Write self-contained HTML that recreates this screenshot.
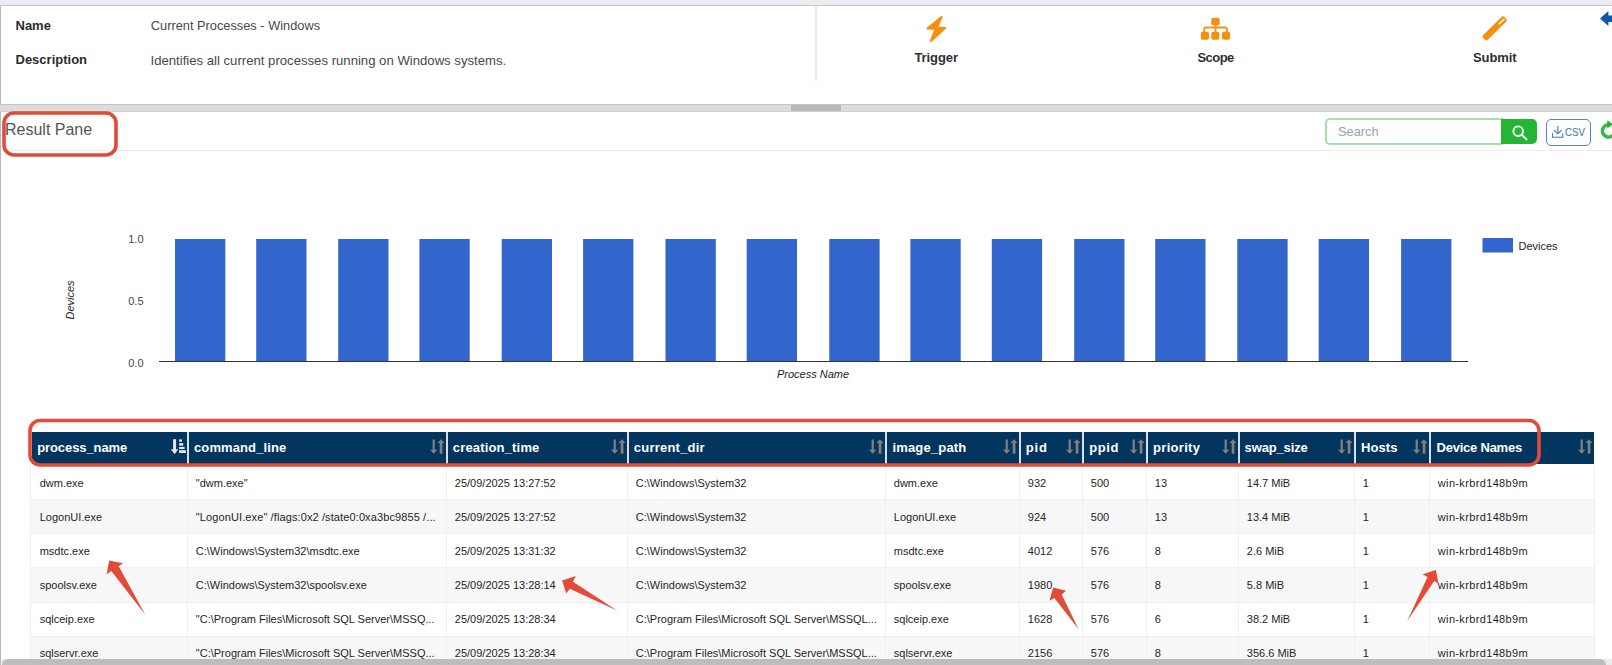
<!DOCTYPE html>
<html><head><meta charset="utf-8">
<style>
*{box-sizing:border-box;margin:0;padding:0}
html,body{width:1612px;height:665px;overflow:hidden;background:#fff}
body{position:relative;font-family:"Liberation Sans",sans-serif;color:#222}
.a{position:absolute}
.t{position:absolute;white-space:nowrap;line-height:1}
.lbl{font-size:13px;font-weight:bold;color:#2b2b2b}
.val{font-size:13px;color:#484848}
.hd{font-size:13px;font-weight:bold;color:#fff;letter-spacing:-0.3px}
.bd{font-size:11px;color:#252525}
.act{font-size:13px;font-weight:bold;color:#2f2f2f;letter-spacing:-0.1px}
</style></head><body>
<!-- top band -->
<div class="a" style="left:0;top:0;width:1612px;height:5px;background:#e9ecf1"></div>
<div class="a" style="left:0;top:5px;width:1612px;height:1px;background:#c6c8cc"></div>
<!-- left border -->
<div class="a" style="left:0;top:6px;width:1px;height:98px;background:#b9b9b9"></div>
<div class="a" style="left:0;top:112px;width:1px;height:553px;background:#b9b9b9"></div>

<!-- info -->
<div class="t lbl" style="left:15.5px;top:19px">Name</div>
<div class="t lbl" style="left:15.5px;top:53.3px">Description</div>
<div class="t val" style="left:150.8px;top:19.6px;font-size:12.8px">Current Processes - Windows</div>
<div class="t val" style="left:150.5px;top:53.8px;font-size:13.15px">Identifies all current processes running on Windows systems.</div>

<!-- divider -->
<div class="a" style="left:815px;top:6px;width:2px;height:75px;background:#e6e9ef"></div>

<!-- actions -->
<svg class="a" style="left:920px;top:12px" width="32" height="34" viewBox="920 12 32 34">
  <polygon points="941.5,17 927.5,28.5 935.5,29 931,41 945,28 937,27.5" fill="#f5900f" stroke="#f5900f" stroke-width="2.2" stroke-linejoin="round"/>
</svg>
<div class="t act" style="left:914.5px;top:51px">Trigger</div>

<svg class="a" style="left:1196px;top:14px" width="40" height="30" viewBox="1196 14 40 30">
  <g fill="#f5900f">
    <rect x="1211.2" y="17.7" width="8.5" height="7.5" rx="2"/>
    <rect x="1200.8" y="31.8" width="8.2" height="8" rx="2"/>
    <rect x="1211.2" y="31.8" width="8.2" height="8" rx="2"/>
    <rect x="1222" y="31.8" width="8.2" height="8" rx="2"/>
    <rect x="1214.6" y="24" width="1.8" height="8"/>
    <path d="M1204.2 32 V29.5 a2 2 0 0 1 2 -2 H1225 a2 2 0 0 1 2 2 V32" fill="none" stroke="#f5900f" stroke-width="1.8"/>
  </g>
</svg>
<div class="t act" style="left:1197.5px;top:51px;letter-spacing:-0.55px">Scope</div>

<svg class="a" style="left:1478px;top:12px" width="32" height="34" viewBox="1478 12 32 34">
  <rect x="1479.7" y="25.1" width="30" height="6.5" rx="2.2" transform="rotate(-44.5 1494.7 28.35)" fill="#f5900f"/>
  <line x1="1499.4" y1="23.7" x2="1504" y2="19.3" stroke="#fff" stroke-width="1.5" stroke-linecap="round"/>
</svg>
<div class="t act" style="left:1473px;top:51px">Submit</div>

<svg class="a" style="left:1596px;top:8px" width="16" height="22" viewBox="1596 8 16 22">
  <polygon points="1600,18.6 1608.4,11 1608.4,15.4 1612,15.4 1612,22 1608.4,22 1608.4,26" fill="#0b57a8"/>
</svg>

<!-- splitter -->
<div class="a" style="left:0;top:104px;width:1612px;height:8px;background:#dcdcdc;border-top:1px solid #c4c4c4;border-bottom:1px solid #cfcfcf"></div>
<div class="a" style="left:791px;top:105px;width:50px;height:6px;background:#b9b9b9"></div>

<!-- result pane header -->
<div class="t" style="left:5px;top:121.8px;font-size:16px;color:#555">Result Pane</div>
<div class="a" style="left:1px;top:150px;width:1611px;height:1px;background:#ececec"></div>

<div class="a" style="left:1325px;top:118px;width:178px;height:27px;border:2px solid #a3e2aa;border-right:none;border-radius:5px 0 0 5px"></div>
<div class="t" style="left:1338px;top:126.2px;font-size:12.8px;color:#9aa0a8">Search</div>
<div class="a" style="left:1501px;top:118.5px;width:35.5px;height:25.8px;background:#24b632;border-radius:0 5px 5px 0"></div>
<svg class="a" style="left:1508px;top:122px" width="22" height="22" viewBox="1508 122 22 22">
  <circle cx="1518.2" cy="131.2" r="4.8" fill="none" stroke="#fff" stroke-width="1.9"/>
  <line x1="1521.8" y1="134.8" x2="1526.5" y2="139.4" stroke="#fff" stroke-width="2" stroke-linecap="round"/>
</svg>
<div class="a" style="left:1546px;top:119px;width:45px;height:26.5px;border:1.5px solid #5486c4;border-radius:5px"></div>
<svg class="a" style="left:1550px;top:123px" width="16" height="18" viewBox="1550 123 16 18">
  <path d="M1552.5 133.2 V137.2 H1562.8 V133.2" fill="none" stroke="#3f78bd" stroke-width="1.1"/>
  <line x1="1557.9" y1="125.9" x2="1557.9" y2="133.4" stroke="#3f78bd" stroke-width="1.1"/>
  <path d="M1554.3 130.2 L1557.9 133.8 L1561.5 130.2" fill="none" stroke="#3f78bd" stroke-width="1.1"/>
</svg>
<div class="t" style="left:1565px;top:127.3px;font-size:11.8px;color:#3b72b5;transform:scaleX(0.82);transform-origin:0 0">CSV</div>
<svg class="a" style="left:1596px;top:115px" width="16" height="30" viewBox="1596 115 16 30">
  <path d="M1609.5 124.9 A6.1 6.1 0 1 0 1613.5 134.5" fill="none" stroke="#34b847" stroke-width="3.4"/>
  <polygon points="1607.3,120.3 1607.3,128.2 1613,124.2" fill="#27ad3b"/>
</svg>

<!-- CHART -->
<svg class="a" style="left:0;top:160px" width="1612" height="240" viewBox="0 160 1612 240" id="chart">
  <g fill="#3366cc"><rect x="175.0" y="239" width="50.3" height="122"/><rect x="256.2" y="239" width="50.3" height="122"/><rect x="338.2" y="239" width="50.3" height="122"/><rect x="419.4" y="239" width="50.3" height="122"/><rect x="501.7" y="239" width="50.3" height="122"/><rect x="583.1" y="239" width="50.3" height="122"/><rect x="665.5" y="239" width="50.3" height="122"/><rect x="746.7" y="239" width="50.3" height="122"/><rect x="829.3" y="239" width="50.3" height="122"/><rect x="910.4" y="239" width="50.3" height="122"/><rect x="991.8" y="239" width="50.3" height="122"/><rect x="1074.2" y="239" width="50.3" height="122"/><rect x="1155.2" y="239" width="50.3" height="122"/><rect x="1237.3" y="239" width="50.3" height="122"/><rect x="1318.7" y="239" width="50.3" height="122"/><rect x="1401.1" y="239" width="50.3" height="122"/></g>
  <rect x="159" y="361" width="1309" height="1" fill="#333"/>
  <g font-family="Liberation Sans" font-size="11" fill="#444" text-anchor="end">
    <text x="143.5" y="243.3">1.0</text>
    <text x="143.5" y="304.8">0.5</text>
    <text x="143.5" y="367.3">0.0</text>
  </g>
  <text x="813" y="377.9" font-family="Liberation Sans" font-size="11" font-style="italic" fill="#222" text-anchor="middle">Process Name</text>
  <text transform="translate(74.4,300) rotate(-90)" font-family="Liberation Sans" font-size="11" font-style="italic" fill="#222" text-anchor="middle">Devices</text>
  <rect x="1482.5" y="238" width="30.5" height="14.5" fill="#3366cc"/>
  <text x="1518.5" y="250.1" font-family="Liberation Sans" font-size="11" fill="#222">Devices</text>
</svg>

<!-- TABLE -->
<div class="a" style="left:32px;top:432px;width:1562px;height:32px;background:#03365f"></div>
<div class="a" style="left:187px;top:432px;width:2px;height:32px;background:#d9dde3"></div>
<div class="a" style="left:446px;top:432px;width:2px;height:32px;background:#d9dde3"></div>
<div class="a" style="left:627px;top:432px;width:2px;height:32px;background:#d9dde3"></div>
<div class="a" style="left:885px;top:432px;width:2px;height:32px;background:#d9dde3"></div>
<div class="a" style="left:1019px;top:432px;width:2px;height:32px;background:#d9dde3"></div>
<div class="a" style="left:1082px;top:432px;width:2px;height:32px;background:#d9dde3"></div>
<div class="a" style="left:1146px;top:432px;width:2px;height:32px;background:#d9dde3"></div>
<div class="a" style="left:1238px;top:432px;width:2px;height:32px;background:#d9dde3"></div>
<div class="a" style="left:1354px;top:432px;width:2px;height:32px;background:#d9dde3"></div>
<div class="a" style="left:1429px;top:432px;width:2px;height:32px;background:#d9dde3"></div>
<div class="t hd" style="left:37.20px;top:441px;letter-spacing:-0.091px">process_name</div>
<svg class="a" style="left:170px;top:438px" width="17" height="17" viewBox="170 438 17 17"><rect x="173.1" y="439.2" width="3" height="11" fill="#e1e5ec"/><path d="M170.8 449.3 L178.3 449.3 L174.6 454.3 Z" fill="#e1e5ec"/><rect x="179.1" y="439.4" width="2.9" height="2.3" fill="#e1e5ec"/><rect x="179.1" y="443.1" width="4.1" height="2.5" fill="#e1e5ec"/><rect x="179.1" y="446.9" width="5.5" height="2.2" fill="#e1e5ec"/><rect x="179.1" y="450.2" width="6.8" height="2.8" fill="#e1e5ec"/></svg>
<div class="t hd" style="left:194.00px;top:441px;letter-spacing:0.109px">command_line</div>
<svg class="a" style="left:429.8px;top:438px" width="16" height="17" viewBox="0 0 16 17"><rect x="2.6" y="1.5" width="2.2" height="10.6" fill="#808080"/><path d="M0.1 11.7 L7.3 11.7 L3.7 15.7 Z" fill="#808080"/><rect x="9.7" y="4.8" width="2.7" height="10.9" fill="#808080"/><path d="M7.5 5 L14.4 5 L10.95 1.3 Z" fill="#808080"/></svg>
<div class="t hd" style="left:452.80px;top:441px;letter-spacing:0.167px">creation_time</div>
<svg class="a" style="left:610.8px;top:438px" width="16" height="17" viewBox="0 0 16 17"><rect x="2.6" y="1.5" width="2.2" height="10.6" fill="#808080"/><path d="M0.1 11.7 L7.3 11.7 L3.7 15.7 Z" fill="#808080"/><rect x="9.7" y="4.8" width="2.7" height="10.9" fill="#808080"/><path d="M7.5 5 L14.4 5 L10.95 1.3 Z" fill="#808080"/></svg>
<div class="t hd" style="left:633.80px;top:441px;letter-spacing:0.220px">current_dir</div>
<svg class="a" style="left:868.8px;top:438px" width="16" height="17" viewBox="0 0 16 17"><rect x="2.6" y="1.5" width="2.2" height="10.6" fill="#808080"/><path d="M0.1 11.7 L7.3 11.7 L3.7 15.7 Z" fill="#808080"/><rect x="9.7" y="4.8" width="2.7" height="10.9" fill="#808080"/><path d="M7.5 5 L14.4 5 L10.95 1.3 Z" fill="#808080"/></svg>
<div class="t hd" style="left:892.40px;top:441px;letter-spacing:0.178px">image_path</div>
<svg class="a" style="left:1002.8px;top:438px" width="16" height="17" viewBox="0 0 16 17"><rect x="2.6" y="1.5" width="2.2" height="10.6" fill="#808080"/><path d="M0.1 11.7 L7.3 11.7 L3.7 15.7 Z" fill="#808080"/><rect x="9.7" y="4.8" width="2.7" height="10.9" fill="#808080"/><path d="M7.5 5 L14.4 5 L10.95 1.3 Z" fill="#808080"/></svg>
<div class="t hd" style="left:1025.80px;top:441px;letter-spacing:0.800px">pid</div>
<svg class="a" style="left:1065.8px;top:438px" width="16" height="17" viewBox="0 0 16 17"><rect x="2.6" y="1.5" width="2.2" height="10.6" fill="#808080"/><path d="M0.1 11.7 L7.3 11.7 L3.7 15.7 Z" fill="#808080"/><rect x="9.7" y="4.8" width="2.7" height="10.9" fill="#808080"/><path d="M7.5 5 L14.4 5 L10.95 1.3 Z" fill="#808080"/></svg>
<div class="t hd" style="left:1089.20px;top:441px;letter-spacing:0.600px">ppid</div>
<svg class="a" style="left:1129.8px;top:438px" width="16" height="17" viewBox="0 0 16 17"><rect x="2.6" y="1.5" width="2.2" height="10.6" fill="#808080"/><path d="M0.1 11.7 L7.3 11.7 L3.7 15.7 Z" fill="#808080"/><rect x="9.7" y="4.8" width="2.7" height="10.9" fill="#808080"/><path d="M7.5 5 L14.4 5 L10.95 1.3 Z" fill="#808080"/></svg>
<div class="t hd" style="left:1153.00px;top:441px;letter-spacing:0.314px">priority</div>
<svg class="a" style="left:1221.8px;top:438px" width="16" height="17" viewBox="0 0 16 17"><rect x="2.6" y="1.5" width="2.2" height="10.6" fill="#808080"/><path d="M0.1 11.7 L7.3 11.7 L3.7 15.7 Z" fill="#808080"/><rect x="9.7" y="4.8" width="2.7" height="10.9" fill="#808080"/><path d="M7.5 5 L14.4 5 L10.95 1.3 Z" fill="#808080"/></svg>
<div class="t hd" style="left:1244.60px;top:441px;letter-spacing:-0.150px">swap_size</div>
<svg class="a" style="left:1337.8px;top:438px" width="16" height="17" viewBox="0 0 16 17"><rect x="2.6" y="1.5" width="2.2" height="10.6" fill="#808080"/><path d="M0.1 11.7 L7.3 11.7 L3.7 15.7 Z" fill="#808080"/><rect x="9.7" y="4.8" width="2.7" height="10.9" fill="#808080"/><path d="M7.5 5 L14.4 5 L10.95 1.3 Z" fill="#808080"/></svg>
<div class="t hd" style="left:1361.00px;top:441px;letter-spacing:0.100px">Hosts</div>
<svg class="a" style="left:1412.8px;top:438px" width="16" height="17" viewBox="0 0 16 17"><rect x="2.6" y="1.5" width="2.2" height="10.6" fill="#808080"/><path d="M0.1 11.7 L7.3 11.7 L3.7 15.7 Z" fill="#808080"/><rect x="9.7" y="4.8" width="2.7" height="10.9" fill="#808080"/><path d="M7.5 5 L14.4 5 L10.95 1.3 Z" fill="#808080"/></svg>
<div class="t hd" style="left:1436.60px;top:441px;letter-spacing:-0.236px">Device Names</div>
<svg class="a" style="left:1577.8px;top:438px" width="16" height="17" viewBox="0 0 16 17"><rect x="2.6" y="1.5" width="2.2" height="10.6" fill="#808080"/><path d="M0.1 11.7 L7.3 11.7 L3.7 15.7 Z" fill="#808080"/><rect x="9.7" y="4.8" width="2.7" height="10.9" fill="#808080"/><path d="M7.5 5 L14.4 5 L10.95 1.3 Z" fill="#808080"/></svg>
<div class="a" style="left:30px;top:464px;width:1565px;height:35px;background:#ffffff"></div>
<div class="a" style="left:30px;top:499px;width:1565px;height:34px;background:#f7f7f7"></div>
<div class="a" style="left:30px;top:499px;width:1564px;height:1px;background:#f0f0f0"></div>
<div class="a" style="left:30px;top:533px;width:1565px;height:34px;background:#ffffff"></div>
<div class="a" style="left:30px;top:533px;width:1564px;height:1px;background:#f0f0f0"></div>
<div class="a" style="left:30px;top:567px;width:1565px;height:35px;background:#f7f7f7"></div>
<div class="a" style="left:30px;top:567px;width:1564px;height:1px;background:#f0f0f0"></div>
<div class="a" style="left:30px;top:602px;width:1565px;height:34px;background:#ffffff"></div>
<div class="a" style="left:30px;top:602px;width:1564px;height:1px;background:#f0f0f0"></div>
<div class="a" style="left:30px;top:636px;width:1565px;height:64px;background:#f7f7f7"></div>
<div class="a" style="left:30px;top:636px;width:1564px;height:1px;background:#f0f0f0"></div>
<div class="a" style="left:187px;top:464px;width:1px;height:200px;background:#f0f0f0"></div>
<div class="a" style="left:446px;top:464px;width:1px;height:200px;background:#f0f0f0"></div>
<div class="a" style="left:627px;top:464px;width:1px;height:200px;background:#f0f0f0"></div>
<div class="a" style="left:885px;top:464px;width:1px;height:200px;background:#f0f0f0"></div>
<div class="a" style="left:1019px;top:464px;width:1px;height:200px;background:#f0f0f0"></div>
<div class="a" style="left:1082px;top:464px;width:1px;height:200px;background:#f0f0f0"></div>
<div class="a" style="left:1146px;top:464px;width:1px;height:200px;background:#f0f0f0"></div>
<div class="a" style="left:1238px;top:464px;width:1px;height:200px;background:#f0f0f0"></div>
<div class="a" style="left:1354px;top:464px;width:1px;height:200px;background:#f0f0f0"></div>
<div class="a" style="left:1429px;top:464px;width:1px;height:200px;background:#f0f0f0"></div>
<div class="a" style="left:30px;top:464px;width:1px;height:200px;background:#f0f0f0"></div>
<div class="a" style="left:1594px;top:464px;width:1px;height:200px;background:#f0f0f0"></div>
<div class="t bd" style="left:39.7px;top:477.50px">dwm.exe</div>
<div class="t bd" style="left:195.8px;top:477.50px">&quot;dwm.exe&quot;</div>
<div class="t bd" style="left:454.8px;top:477.50px">25/09/2025 13:27:52</div>
<div class="t bd" style="left:635.8px;top:477.50px">C:\Windows\System32</div>
<div class="t bd" style="left:893.8px;top:477.50px">dwm.exe</div>
<div class="t bd" style="left:1027.8px;top:477.50px">932</div>
<div class="t bd" style="left:1090.8px;top:477.50px">500</div>
<div class="t bd" style="left:1154.8px;top:477.50px">13</div>
<div class="t bd" style="left:1246.8px;top:477.50px">14.7 MiB</div>
<div class="t bd" style="left:1362.8px;top:477.50px">1</div>
<div class="t bd" style="left:1437.8px;top:477.50px;letter-spacing:0.35px">win-krbrd148b9m</div>
<div class="t bd" style="left:39.7px;top:511.50px">LogonUI.exe</div>
<div class="t bd" style="left:195.8px;top:511.50px;letter-spacing:0.11px">&quot;LogonUI.exe&quot; /flags:0x2 /state0:0xa3bc9855 /...</div>
<div class="t bd" style="left:454.8px;top:511.50px">25/09/2025 13:27:52</div>
<div class="t bd" style="left:635.8px;top:511.50px">C:\Windows\System32</div>
<div class="t bd" style="left:893.8px;top:511.50px">LogonUI.exe</div>
<div class="t bd" style="left:1027.8px;top:511.50px">924</div>
<div class="t bd" style="left:1090.8px;top:511.50px">500</div>
<div class="t bd" style="left:1154.8px;top:511.50px">13</div>
<div class="t bd" style="left:1246.8px;top:511.50px">13.4 MiB</div>
<div class="t bd" style="left:1362.8px;top:511.50px">1</div>
<div class="t bd" style="left:1437.8px;top:511.50px;letter-spacing:0.35px">win-krbrd148b9m</div>
<div class="t bd" style="left:39.7px;top:545.50px">msdtc.exe</div>
<div class="t bd" style="left:195.8px;top:545.50px">C:\Windows\System32\msdtc.exe</div>
<div class="t bd" style="left:454.8px;top:545.50px">25/09/2025 13:31:32</div>
<div class="t bd" style="left:635.8px;top:545.50px">C:\Windows\System32</div>
<div class="t bd" style="left:893.8px;top:545.50px">msdtc.exe</div>
<div class="t bd" style="left:1027.8px;top:545.50px">4012</div>
<div class="t bd" style="left:1090.8px;top:545.50px">576</div>
<div class="t bd" style="left:1154.8px;top:545.50px">8</div>
<div class="t bd" style="left:1246.8px;top:545.50px">2.6 MiB</div>
<div class="t bd" style="left:1362.8px;top:545.50px">1</div>
<div class="t bd" style="left:1437.8px;top:545.50px;letter-spacing:0.35px">win-krbrd148b9m</div>
<div class="t bd" style="left:39.7px;top:579.50px">spoolsv.exe</div>
<div class="t bd" style="left:195.8px;top:579.50px">C:\Windows\System32\spoolsv.exe</div>
<div class="t bd" style="left:454.8px;top:579.50px">25/09/2025 13:28:14</div>
<div class="t bd" style="left:635.8px;top:579.50px">C:\Windows\System32</div>
<div class="t bd" style="left:893.8px;top:579.50px">spoolsv.exe</div>
<div class="t bd" style="left:1027.8px;top:579.50px">1980</div>
<div class="t bd" style="left:1090.8px;top:579.50px">576</div>
<div class="t bd" style="left:1154.8px;top:579.50px">8</div>
<div class="t bd" style="left:1246.8px;top:579.50px">5.8 MiB</div>
<div class="t bd" style="left:1362.8px;top:579.50px">1</div>
<div class="t bd" style="left:1437.8px;top:579.50px;letter-spacing:0.35px">win-krbrd148b9m</div>
<div class="t bd" style="left:39.7px;top:613.50px">sqlceip.exe</div>
<div class="t bd" style="left:195.8px;top:613.50px">&quot;C:\Program Files\Microsoft SQL Server\MSSQ...</div>
<div class="t bd" style="left:454.8px;top:613.50px">25/09/2025 13:28:34</div>
<div class="t bd" style="left:635.8px;top:613.50px">C:\Program Files\Microsoft SQL Server\MSSQL...</div>
<div class="t bd" style="left:893.8px;top:613.50px">sqlceip.exe</div>
<div class="t bd" style="left:1027.8px;top:613.50px">1628</div>
<div class="t bd" style="left:1090.8px;top:613.50px">576</div>
<div class="t bd" style="left:1154.8px;top:613.50px">6</div>
<div class="t bd" style="left:1246.8px;top:613.50px">38.2 MiB</div>
<div class="t bd" style="left:1362.8px;top:613.50px">1</div>
<div class="t bd" style="left:1437.8px;top:613.50px;letter-spacing:0.35px">win-krbrd148b9m</div>
<div class="t bd" style="left:39.7px;top:647.50px">sqlservr.exe</div>
<div class="t bd" style="left:195.8px;top:647.50px">&quot;C:\Program Files\Microsoft SQL Server\MSSQ...</div>
<div class="t bd" style="left:454.8px;top:647.50px">25/09/2025 13:28:34</div>
<div class="t bd" style="left:635.8px;top:647.50px">C:\Program Files\Microsoft SQL Server\MSSQL...</div>
<div class="t bd" style="left:893.8px;top:647.50px">sqlservr.exe</div>
<div class="t bd" style="left:1027.8px;top:647.50px">2156</div>
<div class="t bd" style="left:1090.8px;top:647.50px">576</div>
<div class="t bd" style="left:1154.8px;top:647.50px">8</div>
<div class="t bd" style="left:1246.8px;top:647.50px">356.6 MiB</div>
<div class="t bd" style="left:1362.8px;top:647.50px">1</div>
<div class="t bd" style="left:1437.8px;top:647.50px;letter-spacing:0.35px">win-krbrd148b9m</div>

<!-- bottom scrollbar -->
<div class="a" style="left:1px;top:659px;width:1611px;height:6px;background:#ebebeb"></div>
<div class="a" style="left:2px;top:659px;width:1604px;height:12px;background:#bdbdbd;border-radius:6px"></div>

<!-- annotations -->
<svg class="a" style="left:0;top:0" width="1612" height="665" viewBox="0 0 1612 665" id="ann">
  <rect x="4" y="113" width="112" height="42" rx="10" fill="none" stroke="#e24b38" stroke-width="3.6"/>
  <rect x="30" y="420.5" width="1509" height="44.5" rx="10" fill="none" stroke="#e24b38" stroke-width="3.6"/>
  <polygon fill="#e24b38" points="109.2,560.5 122.9,563.2 118.7,566.3 145.3,614.7 111.3,571 106.6,574.2"/>
  <polygon fill="#e24b38" points="562.1,580.4 575.9,576.1 573,581.7 617,610.5 569.7,588.7 566.3,593.4"/>
  <polygon fill="#e24b38" points="1053.1,587.6 1066.2,590.8 1061.7,594.4 1078.6,629.2 1054.4,598 1049.5,600.7"/>
  <polygon fill="#e24b38" points="1436,570 1422.6,574.2 1427.6,577.1 1407.2,621 1434.2,581.1 1438.4,583.7"/>
</svg>
</body></html>
